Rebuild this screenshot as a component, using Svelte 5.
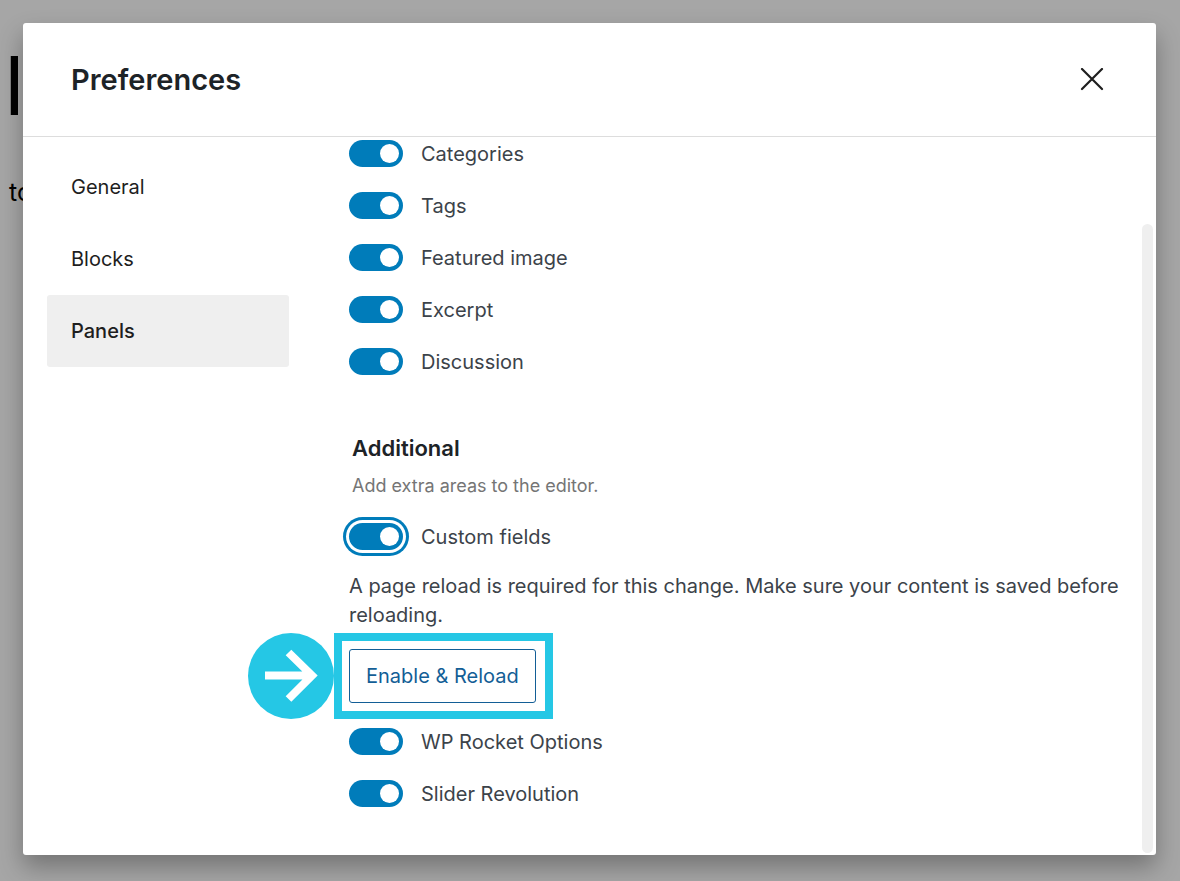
<script>
  let open = $state(true);
  let active = $state('Panels');

  const tabs = ['General', 'Blocks', 'Panels'];

  let panels = $state([
    { id: 'categories', label: 'Categories', enabled: true },
    { id: 'tags', label: 'Tags', enabled: true },
    { id: 'featured-image', label: 'Featured image', enabled: true },
    { id: 'excerpt', label: 'Excerpt', enabled: true },
    { id: 'discussion', label: 'Discussion', enabled: true }
  ]);

  let customFields = $state({ id: 'custom-fields', label: 'Custom fields', enabled: true });

  let extras = $state([
    { id: 'wp-rocket', label: 'WP Rocket Options', enabled: true },
    { id: 'slider-revolution', label: 'Slider Revolution', enabled: true }
  ]);
</script>

{#snippet toggle(item, focused)}
  <div class="toggle-row">
    <input type="checkbox" id={item.id} class:focused bind:checked={item.enabled} />
    <label for={item.id}>{item.label}</label>
  </div>
{/snippet}

<div class="editor" aria-hidden="true">
  <div class="post-title">ll</div>
  <div class="post-text">to</div>
</div>

{#if open}
  <div class="modal" role="dialog" aria-labelledby="modal-title">
    <header>
      <h1 id="modal-title">Preferences</h1>
      <button class="close" aria-label="Close" onclick={() => (open = false)}>
        <svg width="24" height="24" viewBox="0 0 24 24">
          <path d="M2 1L22 21M22 1L2 21" fill="none" stroke="currentColor" stroke-width="2.2" stroke-linecap="round" />
        </svg>
      </button>
    </header>

    <div class="body">
      <nav>
        {#each tabs as tab}
          <button class="tab" class:active={tab === active} onclick={() => (active = tab)}>{tab}</button>
        {/each}
      </nav>

      <main>
        <div class="toggles">
          {#each panels as item}
            {@render toggle(item, false)}
          {/each}
        </div>

        <section>
          <h2>Additional</h2>
          <p class="description">Add extra areas to the editor.</p>

          {@render toggle(customFields, true)}

          <p class="notice">
            A page reload is required for this change. Make sure your content is saved before reloading.
          </p>

          <div class="reload">
            <button class="secondary">Enable &amp; Reload</button>
            <div class="highlight">
              <svg class="arrow" width="86" height="86" viewBox="0 0 86 86">
                <circle cx="43" cy="43" r="43" fill="#25c7e5" />
                <path d="M17 42.5H64M40.5 19.5L64 42.5L40.5 66" fill="none" stroke="#fff" stroke-width="8" />
              </svg>
            </div>
          </div>

          <div class="toggles">
            {#each extras as item}
              {@render toggle(item, false)}
            {/each}
          </div>
        </section>
      </main>
    </div>

    <div class="scrollbar"></div>
  </div>
{/if}

<style>
  :global(body) {
    background: #a6a6a6;
    font-family: Inter, 'Liberation Sans', sans-serif;
    font-size: 20px;
    color: #1e1e1e;
  }

  .editor {
    position: absolute;
    top: 0;
    left: 0;
    color: #000;
  }

  .post-title {
    position: absolute;
    top: 42px;
    left: -13px;
    font: 82px/90px 'Liberation Sans', sans-serif;
  }

  .post-text {
    position: absolute;
    top: 176px;
    left: 9px;
    font-size: 25px;
    line-height: 32px;
  }

  .modal {
    position: relative;
    margin: 23px 24px 26px 23px;
    background: #fff;
    border-radius: 3px;
    box-shadow: 0 12px 24px rgba(0, 0, 0, 0.3);
  }

  header {
    display: flex;
    justify-content: space-between;
    align-items: center;
    height: 113px;
    padding: 0 48px;
    border-bottom: 1px solid #ddd;
  }

  h1 {
    margin: 0;
    font-size: 29px;
    line-height: 36px;
    font-weight: 600;
    color: #1d2327;
  }

  button {
    font: inherit;
    color: inherit;
    background: none;
    border: 0;
    cursor: pointer;
  }

  .close {
    display: flex;
    padding: 4px;
  }

  .body {
    display: flex;
    gap: 60px;
    padding: 0 24px 48px;
  }

  nav {
    display: flex;
    flex-direction: column;
    flex: 0 0 242px;
    padding-top: 14px;
  }

  .tab {
    height: 72px;
    padding: 0 24px;
    border-radius: 3px;
    text-align: left;
  }

  .tab.active {
    background: #efefef;
    font-weight: 500;
  }

  main {
    flex: 1;
    padding-top: 3px;
    color: #3c434a;
  }

  .toggles {
    display: flex;
    flex-direction: column;
    gap: 25px;
  }

  .toggle-row {
    display: flex;
    align-items: center;
    gap: 18px;
    height: 27px;
  }

  input {
    appearance: none;
    display: flex;
    align-items: center;
    width: 54px;
    height: 27px;
    margin: 0;
    padding: 4px;
    box-sizing: border-box;
    border-radius: 14px;
    background: #8c8f94;
  }

  input::before {
    content: '';
    width: 19px;
    height: 19px;
    border-radius: 50%;
    background: #fff;
  }

  input:checked {
    justify-content: flex-end;
    background: #007cba;
  }

  input.focused {
    box-shadow: 0 0 0 3px #fff, 0 0 0 6px #007cba;
  }

  section {
    margin-top: 58px;
  }

  h2 {
    margin: 0 0 11px 3px;
    font-size: 22px;
    line-height: 30px;
    font-weight: 600;
    color: #1d2327;
  }

  .description {
    margin: 0 0 25px 3px;
    font-size: 18px;
    line-height: 24px;
    color: #757575;
  }

  .notice {
    margin: 22px 0 19px;
    line-height: 29px;
  }

  .reload {
    position: relative;
    width: fit-content;
    margin-bottom: 25px;
  }

  .secondary {
    display: block;
    height: 54px;
    padding: 0 16px;
    border: 1px solid #135e96;
    border-radius: 3px;
    color: #135e96;
  }

  .highlight {
    position: absolute;
    inset: -16px -17px -16px -15px;
    border: 8px solid #25c7e5;
    pointer-events: none;
  }

  .arrow {
    position: absolute;
    top: -8px;
    right: calc(100% + 8px);
  }

  .scrollbar {
    position: absolute;
    top: 201px;
    right: 3px;
    bottom: 2px;
    width: 11px;
    border-radius: 6px;
    background: #efefef;
  }
</style>
